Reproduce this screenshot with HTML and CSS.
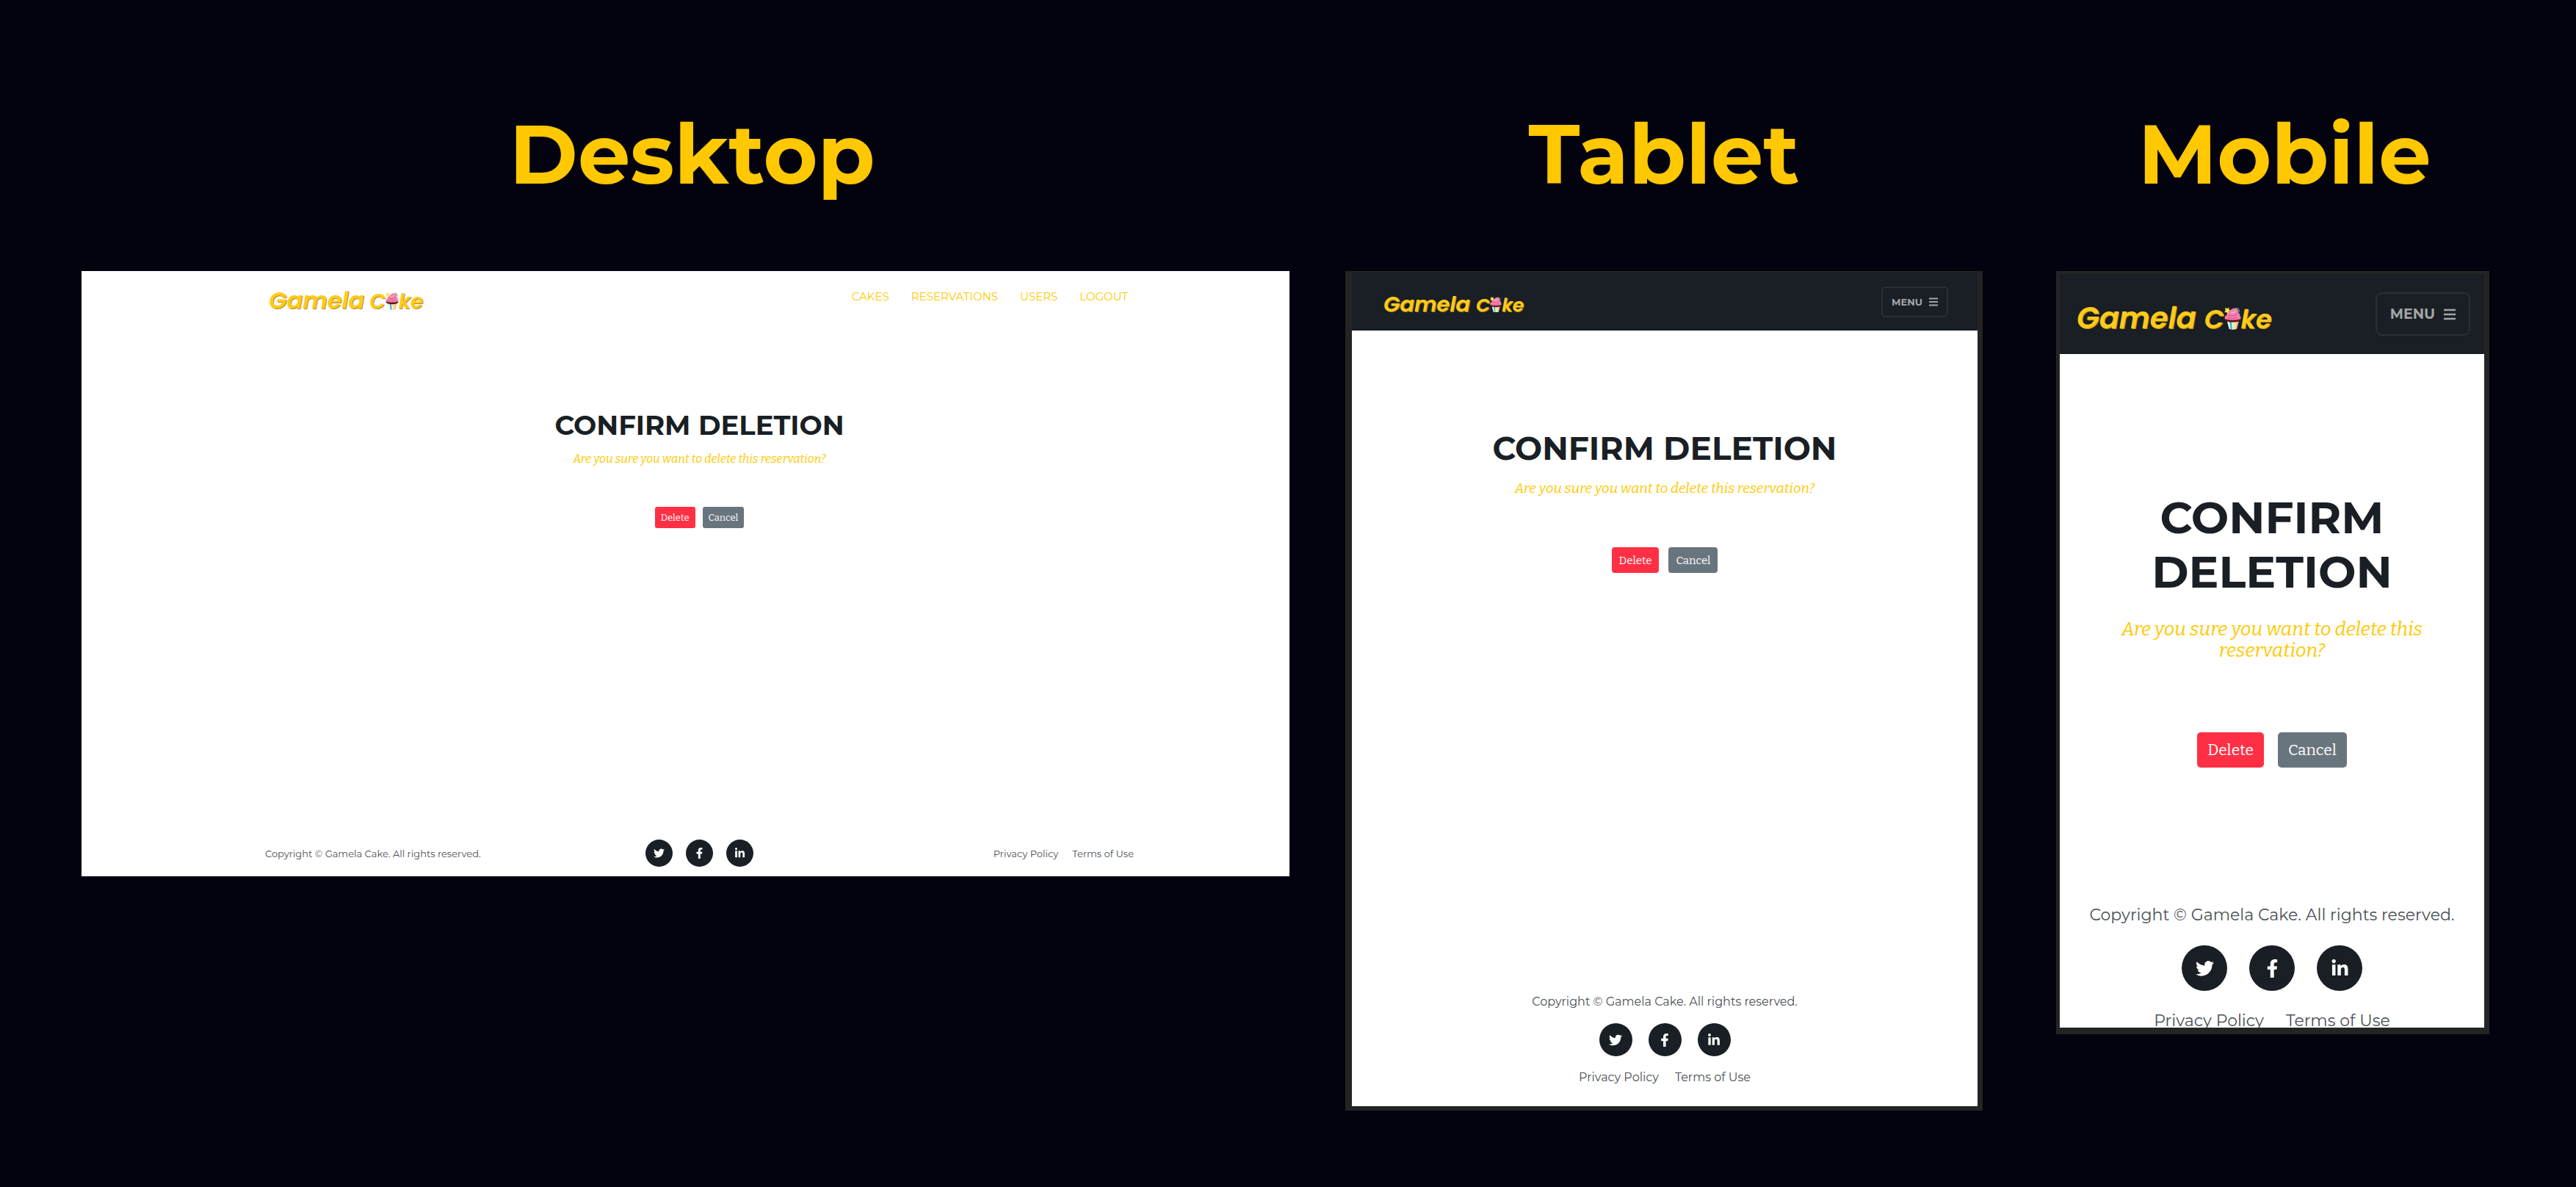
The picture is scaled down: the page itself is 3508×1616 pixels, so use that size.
FILE: index.html
```
<!DOCTYPE html>
<html lang="en">
<head>
<meta charset="utf-8">
<meta name="viewport" content="width=device-width, initial-scale=1">
<title>Gamela Cake – Confirm deletion</title>
<link rel="stylesheet" href="styles.css">
</head>
<body>
<svg class="sprite" aria-hidden="true">
  <symbol id="cake" viewBox="0 0 18 24">
    <path d="M3 14.500h12.500l-2.200 8.700q-4 1.400-8 0z" fill="#f7e08c"/>
    <path d="M3 14.500h2.800l1.200 9-1.700-.4z" fill="#e8f3f5"/>
    <path d="M5.500 14.500h2.600l.6 9.200-2-.3z" fill="#35b9e6"/>
    <path d="M8.100 14.500h1.700l-.1 9.200h-1z" fill="#fff6c9"/>
    <path d="M13.800 14.500h1.700l-2.200 8.700-1.100.3z" fill="#f3a6b8"/>
    <path d="M.5 12h17q.3 2.500-2 3.300-6.500 1.700-13 0-2.300-.8-2-3.300z" fill="#5b1a17"/>
    <path d="M.6 12.500q-.6-3 2-4 0-3 3-3.500 1-2.500 3.500-3.500 3-1 5 .7 1.600 1.600.8 3.800 2.200 1 1.700 3 1.400 1.400.8 3.500-8.500 2.600-16.800 0z" fill="#f57fae"/>
    <path d="M4 8.500q5 2 10-1M2.800 11.500q6 1.500 11-.6" fill="none" stroke="#d9588f" stroke-width=".8"/>
    <path d="M7 5.500q3 1 5-1.500" fill="none" stroke="#ffc0d8" stroke-width="1"/>
    <path d="M12.500 1q3.700.2 3.800 4.500" fill="none" stroke="#3c9a86" stroke-width="1"/>
    <path d="M1 .4l2.200 1.200L5.200.3 5 2.700l2 1.400-2.400.6-.6 2.500-1.600-1.900-2.200.3L1.300 3.400z" fill="#fbe84f"/>
  </symbol>
  <symbol id="twitter" viewBox="0 0 512 512"><path fill="currentColor" d="M459.370 151.716c.325 4.548.325 9.097.325 13.645 0 138.720-105.583 298.558-298.558 298.558-59.452 0-114.680-17.219-161.137-47.106 8.447.974 16.568 1.299 25.340 1.299 49.055 0 94.213-16.568 130.274-44.832-46.132-.975-84.792-31.188-98.112-72.772 6.498.974 12.995 1.624 19.818 1.624 9.421 0 18.843-1.300 27.614-3.573-48.081-9.747-84.143-51.980-84.143-102.985v-1.299c13.969 7.797 30.214 12.670 47.431 13.319-28.264-18.843-46.781-51.005-46.781-87.391 0-19.492 5.197-37.360 14.294-52.954 51.655 63.675 129.300 105.258 216.365 109.807-1.624-7.797-2.599-15.918-2.599-24.040 0-57.828 46.782-104.934 104.934-104.934 30.213 0 57.502 12.670 76.670 33.137 23.715-4.548 46.456-13.320 66.599-25.340-7.798 24.366-24.366 44.833-46.132 57.827 21.117-2.273 41.584-8.122 60.426-16.243-14.292 20.791-32.161 39.308-52.628 54.253z"/></symbol>
  <symbol id="facebook" viewBox="0 0 320 512"><path fill="currentColor" d="M279.140 288l14.220-92.660h-88.910v-60.130c0-25.350 12.420-50.060 52.240-50.060h40.420V6.260S260.430 0 225.360 0c-73.220 0-121.080 44.380-121.080 124.720v70.620H22.890V288h81.390v224h100.170V288z"/></symbol>
  <symbol id="linkedin" viewBox="0 0 448 512"><path fill="currentColor" d="M100.280 448H7.400V148.900h92.880zM53.790 108.100C24.090 108.100 0 83.500 0 53.800a53.790 53.790 0 0 1 107.580 0c0 29.700-24.100 54.300-53.790 54.300zM447.900 448h-92.680V302.400c0-34.700-.7-79.200-48.290-79.200-48.290 0-55.690 37.700-55.690 76.700V448h-92.780V148.900h89.080v40.800h1.300c12.400-23.500 42.690-48.300 87.880-48.300 94 0 111.280 61.900 111.280 142.300V448z"/></symbol>
  <symbol id="bars" viewBox="0 0 16 16"><path d="M0 2h16M0 8h16M0 14h16" stroke="currentColor" stroke-width="2.400" fill="none"/></symbol>
</svg>

<main class="board">
  <section class="device desktop">
    <h1 class="device-title">Desktop</h1>
    <div class="screen">
      <header class="bar">
        <a class="logo" href="#"><span>Gamela</span><span class="cake-word">C<svg class="cake" role="img" aria-label="a"><use href="#cake"/></svg>ke</span></a>
        <nav class="links">
          <a href="#">CAKES</a><a href="#">RESERVATIONS</a><a href="#">USERS</a><a href="#">LOGOUT</a>
        </nav>
      </header>
      <form class="confirm">
        <h2>CONFIRM DELETION</h2>
        <p>Are you sure you want to delete this reservation?</p>
        <div class="actions"><button class="delete" type="button">Delete</button><button class="cancel" type="button">Cancel</button></div>
      </form>
      <footer class="foot">
        <span>Copyright © Gamela Cake. All rights reserved.</span>
        <div class="social">
          <a href="#" aria-label="Twitter"><svg><use href="#twitter"/></svg></a>
          <a href="#" aria-label="Facebook"><svg><use href="#facebook"/></svg></a>
          <a href="#" aria-label="LinkedIn"><svg><use href="#linkedin"/></svg></a>
        </div>
        <div class="legal"><a href="#">Privacy Policy</a><a href="#">Terms of Use</a></div>
      </footer>
    </div>
  </section>

  <section class="device tablet">
    <h1 class="device-title">Tablet</h1>
    <div class="screen">
      <header class="bar">
        <a class="logo" href="#"><span>Gamela</span><span class="cake-word">C<svg class="cake" role="img" aria-label="a"><use href="#cake"/></svg>ke</span></a>
        <button class="menu" type="button">MENU<svg><use href="#bars"/></svg></button>
      </header>
      <form class="confirm">
        <h2>CONFIRM DELETION</h2>
        <p>Are you sure you want to delete this reservation?</p>
        <div class="actions"><button class="delete" type="button">Delete</button><button class="cancel" type="button">Cancel</button></div>
      </form>
      <footer class="foot">
        <span>Copyright © Gamela Cake. All rights reserved.</span>
        <div class="social">
          <a href="#" aria-label="Twitter"><svg><use href="#twitter"/></svg></a>
          <a href="#" aria-label="Facebook"><svg><use href="#facebook"/></svg></a>
          <a href="#" aria-label="LinkedIn"><svg><use href="#linkedin"/></svg></a>
        </div>
        <div class="legal"><a href="#">Privacy Policy</a><a href="#">Terms of Use</a></div>
      </footer>
    </div>
  </section>

  <section class="device mobile">
    <h1 class="device-title">Mobile</h1>
    <div class="screen">
      <header class="bar">
        <a class="logo" href="#"><span>Gamela</span><span class="cake-word">C<svg class="cake" role="img" aria-label="a"><use href="#cake"/></svg>ke</span></a>
        <button class="menu" type="button">MENU<svg><use href="#bars"/></svg></button>
      </header>
      <form class="confirm">
        <h2>CONFIRM DELETION</h2>
        <p>Are you sure you want to delete this reservation?</p>
        <div class="actions"><button class="delete" type="button">Delete</button><button class="cancel" type="button">Cancel</button></div>
      </form>
      <footer class="foot">
        <span>Copyright © Gamela Cake. All rights reserved.</span>
        <div class="social">
          <a href="#" aria-label="Twitter"><svg><use href="#twitter"/></svg></a>
          <a href="#" aria-label="Facebook"><svg><use href="#facebook"/></svg></a>
          <a href="#" aria-label="LinkedIn"><svg><use href="#linkedin"/></svg></a>
        </div>
        <div class="legal"><a href="#">Privacy Policy</a><a href="#">Terms of Use</a></div>
      </footer>
    </div>
  </section>
</main>
</body>
</html>
```
FILE: styles.css
```
:root {
  --night: #02030f;
  --ink: #191f24;
  --yellow: #ffc800;
  --frame: #242424;
  --slab: "Roboto Slab", Bitter, "Zilla Slab", "DejaVu Serif", serif;
}

* { box-sizing: border-box; }

body {
  margin: 0;
  background: var(--night);
  color: var(--ink);
  font-family: Montserrat, Inter, sans-serif;
}

a { color: inherit; text-decoration: none; }
h1, h2, p { margin: 0; }
.sprite { position: absolute; width: 0; height: 0; }

.board {
  display: grid;
  grid-template-columns: 1645fr 868fr 614fr;
  column-gap: 76px;
  align-items: start;
  min-height: 100vh;
  padding: 150px 118px 100px 111px;
}

.device-title {
  margin-bottom: 99px;
  color: var(--yellow);
  font-size: 113px;
  line-height: 120px;
  font-weight: 700;
  text-align: center;
}

.screen {
  display: flex;
  flex-direction: column;
  overflow: hidden;
  background: #fff;
}

.bar {
  display: flex;
  flex-shrink: 0;
  align-items: center;
  justify-content: space-between;
  background: var(--ink);
}

.logo {
  display: flex;
  align-items: baseline;
  gap: var(--word-gap);
  padding-top: var(--logo-drop);
  color: #ffca1c;
  font-family: Poppins, Montserrat, Inter, sans-serif;
  font-size: var(--logo);
  line-height: 40px;
  font-weight: 600;
  font-style: italic;
  text-shadow: 1px 1px 0 #b98a10;
}
.cake-word { font-size: var(--logo-small); }
.cake { width: var(--cake-w); height: var(--cake-h); vertical-align: -2px; }

.menu {
  display: flex;
  align-items: center;
  border: 2px solid #2b3034;
  background: none;
  color: #a3a5a7;
  font-family: inherit;
  font-weight: 700;
}

.confirm {
  display: flex;
  flex-direction: column;
  flex-shrink: 0;
  align-items: center;
  text-align: center;
}
.confirm h2 { font-weight: 700; }
.confirm p {
  color: var(--yellow);
  font-family: var(--slab);
  font-style: italic;
}

.actions { display: flex; }
.actions button {
  border: 0;
  color: #fff;
  font-family: var(--slab);
}
.delete { background: #ff3045; }
.cancel { background: #69757d; }

.foot {
  flex-shrink: 0;
  color: #4b5156;
}
.social, .legal { display: flex; }
.social a {
  display: grid;
  place-items: center;
  width: var(--dot);
  height: var(--dot);
  border-radius: 50%;
  background: var(--ink);
  color: #fff;
}
.social svg { width: var(--glyph); height: var(--glyph); }

.tablet .foot, .mobile .foot {
  display: flex;
  flex-direction: column;
  align-items: center;
}

/* Desktop */
.desktop {
  --logo: 32px; --logo-small: 28px; --word-gap: 7px; --logo-drop: 0;
  --cake-w: 18px; --cake-h: 24px; --dot: 37px; --glyph: 15px;
}
.desktop .device-title { padding-left: 18px; }
.desktop .screen { aspect-ratio: 1645 / 824; padding: 0 212px 13px 250px; }
.desktop .bar { align-items: flex-start; height: 60px; padding: 20px 8px 0 5px; background: none; }
.links { display: flex; gap: 30px; color: var(--yellow); font-size: 15px; line-height: 30px; }
.desktop .confirm { padding-top: 127px; }
.desktop h2 { font-size: 37px; line-height: 46px; }
.desktop p { margin-top: 12px; font-size: 16px; line-height: 22px; }
.desktop .actions { gap: 10px; margin-top: 54px; }
.desktop .actions button { height: 29px; padding: 0 8px; border-radius: 3px; font-size: 13px; }
.desktop .foot {
  display: grid;
  grid-template-columns: 1fr auto 1fr;
  align-items: center;
  margin-top: auto;
  font-size: 13px;
  line-height: 20px;
}
.desktop .social { gap: 18px; }
.desktop .legal { gap: 19px; justify-content: flex-end; }

/* Tablet */
.tablet {
  --logo: 29px; --logo-small: 25px; --word-gap: 8px; --logo-drop: 8px;
  --cake-w: 16px; --cake-h: 23px; --dot: 45px; --glyph: 18px;
}
.tablet .screen {
  aspect-ratio: 868 / 1143;
  border: solid var(--frame);
  border-width: 2px 7px 6px 9px;
  padding-bottom: 27px;
}
.tablet .bar { height: 79px; padding: 0 40px 0 43px; }
.tablet .menu { gap: 9px; height: 42px; padding: 0 12px; border-radius: 6px; font-size: 13px; }
.tablet .menu svg { width: 12px; height: 12px; }
.tablet .confirm { padding-top: 132px; }
.tablet h2 { font-size: 44px; line-height: 56px; }
.tablet p { margin-top: 14px; font-size: 19px; line-height: 26px; }
.tablet .actions { gap: 13px; margin-top: 67px; }
.tablet .actions button { height: 35px; padding: 0 10px; border-radius: 4px; font-size: 15px; }
.tablet .foot { gap: 17px; margin-top: auto; font-size: 16px; line-height: 24px; }
.tablet .social, .tablet .legal { gap: 22px; }

/* Mobile */
.mobile {
  --logo: 40px; --logo-small: 35px; --word-gap: 11px; --logo-drop: 12px;
  --cake-w: 23px; --cake-h: 31px; --dot: 62px; --glyph: 25px;
  padding-left: 24px;
}
.mobile .device-title { padding-left: 32px; }
.mobile .screen {
  aspect-ratio: 590 / 1039;
  border: solid var(--frame);
  border-width: 4px 7px 9px 5px;
}
.mobile .bar { height: 109px; padding: 0 19px 0 23px; }
.mobile .menu { gap: 12px; height: 59px; padding: 0 18px; border-radius: 9px; font-size: 19px; }
.mobile .menu svg { width: 16px; height: 16px; }
.mobile .confirm { padding: 185px 48px 0; }
.mobile h2 { font-size: 61px; line-height: 74px; }
.mobile p { margin-top: 27px; font-size: 26px; line-height: 29px; }
.mobile .actions { gap: 19px; margin-top: 97px; }
.mobile .actions button { height: 48px; padding: 0 14px; border-radius: 5px; font-size: 21px; }
.mobile .foot { gap: 25px; margin-top: 185px; font-size: 22px; line-height: 32px; }
.mobile .social, .mobile .legal { gap: 30px; }
```
